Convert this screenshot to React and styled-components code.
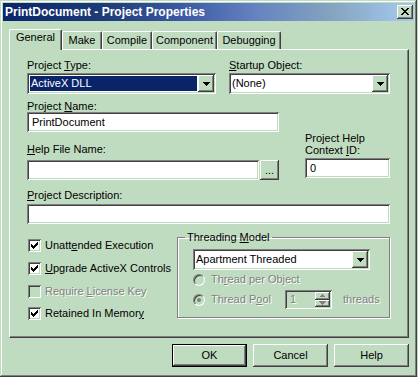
import styled, { createGlobalStyle, css } from 'styled-components';

const FACE = '#c0dcc0';
const SHADOW = '#808080';
const DARK = '#404040';

const raised = css`
  box-shadow: inset -1px -1px ${DARK}, inset 1px 1px #fff, inset -2px -2px ${SHADOW},
    inset 2px 2px ${FACE};
`;

const sunken = css`
  box-shadow: inset 1px 1px ${SHADOW}, inset -1px -1px #fff, inset 2px 2px ${DARK},
    inset -2px -2px ${FACE};
`;

const tabs = [
  { label: 'General', width: 53, active: true },
  { label: 'Make', width: 40 },
  { label: 'Compile', width: 50 },
  { label: 'Component', width: 65 },
  { label: 'Debugging', width: 64 },
];

const DownArrow = ({ color = '#000' }) => (
  <svg width="7" height="4" viewBox="0 0 7 4" shapeRendering="crispEdges">
    <path d="M0 0h7v1H0zM1 1h5v1H1zM2 2h3v1H2zM3 3h1v1H3z" fill={color} />
  </svg>
);

const UpArrow = ({ color = '#000' }) => (
  <svg width="5" height="3" viewBox="0 0 5 3" shapeRendering="crispEdges">
    <path d="M2 0h1v1H2zM1 1h3v1H1zM0 2h5v1H0z" fill={color} />
  </svg>
);

const CheckMark = () => (
  <svg width="7" height="7" viewBox="0 0 7 7" shapeRendering="crispEdges">
    <path
      d="M0 2h1v3H0zM1 3h1v3H1zM2 4h1v3H2zM3 3h1v3H3zM4 2h1v3H4zM5 1h1v3H5zM6 0h1v3H6z"
      fill="#000"
    />
  </svg>
);

function Combo({ value, selected, width }) {
  return (
    <ComboBox $width={width}>
      <ComboValue $selected={selected}>{value}</ComboValue>
      <DropButton>
        <DownArrow />
      </DropButton>
    </ComboBox>
  );
}

function Check({ checked, disabled, top, children }) {
  return (
    <CheckRow $top={top}>
      <CheckBox $disabled={disabled}>{checked && <CheckMark />}</CheckBox>
      <CheckText $disabled={disabled}>{children}</CheckText>
    </CheckRow>
  );
}

function App() {
  return (
    <>
      <GlobalStyle />
      <Window>
        <TitleBar>
          <Title>PrintDocument - Project Properties</Title>
          <CloseButton>
            <svg width="8" height="7" viewBox="0 0 8 7" shapeRendering="crispEdges">
              <path
                d="M0 0h2v1H0zM6 0h2v1H6zM1 1h2v1H1zM5 1h2v1H5zM2 2h4v1H2zM3 3h2v1H3zM2 4h4v1H2zM1 5h2v1H1zM5 5h2v1H5zM0 6h2v1H0zM6 6h2v1H6z"
                fill="#000"
              />
            </svg>
          </CloseButton>
        </TitleBar>

        <Body>
          <TabStrip>
            {tabs.map((t) => (
              <Tab key={t.label} $active={t.active} $width={t.width}>
                {t.label}
              </Tab>
            ))}
          </TabStrip>

          <Panel>
            <TopRow>
              <div>
                <Label>
                  Project <u>T</u>ype:
                </Label>
                <Combo value="ActiveX DLL" selected width={189} />
              </div>
              <div>
                <Label>
                  <u>S</u>tartup Object:
                </Label>
                <Combo value="(None)" width={161} />
              </div>
            </TopRow>

            <MidRow>
              <LeftColumn>
                <Label>
                  Project <u>N</u>ame:
                </Label>
                <Field $width={252}>PrintDocument</Field>
                <Label $mt={11}>
                  <u>H</u>elp File Name:
                </Label>
                <InputRow>
                  <Field $width={232} />
                  <BrowseButton>...</BrowseButton>
                </InputRow>
              </LeftColumn>
              <RightColumn>
                <MultiLabel>
                  Project Help
                  <br />
                  Context <u>I</u>D:
                </MultiLabel>
                <Field $width={85} $mt={2}>
                  0
                </Field>
              </RightColumn>
            </MidRow>

            <Label $mt={9}>
              <u>P</u>roject Description:
            </Label>
            <Field $width={363} $mt={3} />

            <BottomRow>
              <CheckList>
                <Check checked top={0}>
                  Unatt<u>e</u>nded Execution
                </Check>
                <Check checked top={10}>
                  <u>U</u>pgrade ActiveX Controls
                </Check>
                <Check disabled top={10}>
                  Require <u>L</u>icense Key
                </Check>
                <Check checked top={9}>
                  Retained In Memor<u>y</u>
                </Check>
              </CheckList>

              <GroupBox>
                <GroupTitle>
                  Threading <u>M</u>odel
                </GroupTitle>
                <GroupBody>
                  <Combo value="Apartment Threaded" width={177} />
                  <RadioRow $mt={3}>
                    <Radio />
                    <RadioText>
                      Th<u>r</u>ead per Object
                    </RadioText>
                  </RadioRow>
                  <RadioRow $mt={4}>
                    <Radio $checked />
                    <RadioText $width={74}>
                      Thread P<u>o</u>ol
                    </RadioText>
                    <SpinBox>
                      <SpinValue>1</SpinValue>
                      <SpinButtons>
                        <SpinButton>
                          <UpArrow color={SHADOW} />
                        </SpinButton>
                        <SpinButton>
                          <DownArrow color={SHADOW} />
                        </SpinButton>
                      </SpinButtons>
                    </SpinBox>
                    <DisabledText>threads</DisabledText>
                  </RadioRow>
                </GroupBody>
              </GroupBox>
            </BottomRow>
          </Panel>

          <ButtonRow>
            <PushButton $default>OK</PushButton>
            <PushButton>Cancel</PushButton>
            <PushButton>Help</PushButton>
          </ButtonRow>
        </Body>
      </Window>
    </>
  );
}

const GlobalStyle = createGlobalStyle`
  * { box-sizing: border-box; }
  html, body {
    margin: 0;
    padding: 0;
    background: ${FACE};
  }
  body {
    font-family: "Liberation Sans", Arial, sans-serif;
    font-size: 11px;
    color: #000;
  }
  u { text-underline-offset: 1px; }
`;

const Window = styled.div`
  width: 417px;
  height: 377px;
  padding: 3px;
  background: ${FACE};
  box-shadow: inset -1px -1px ${DARK}, inset 1px 1px ${FACE}, inset -2px -2px ${SHADOW},
    inset 2px 2px #fff;
  display: flex;
  flex-direction: column;
`;

const TitleBar = styled.div`
  height: 18px;
  padding: 0 1px 0 2px;
  display: flex;
  align-items: center;
  justify-content: space-between;
  background: linear-gradient(
    90deg,
    #0a246a 0%,
    #1e3c78 25%,
    #3e5ca8 45%,
    #6684c0 62%,
    #84a4c0 80%,
    #a6caf0 100%
  );
`;

const Title = styled.span`
  color: #fff;
  font-weight: bold;
  font-size: 12px;
  line-height: 18px;
  white-space: nowrap;
`;

const CloseButton = styled.div`
  width: 16px;
  height: 14px;
  background: ${FACE};
  ${raised};
  display: flex;
  align-items: center;
  justify-content: center;
  padding-bottom: 1px;
`;

const Body = styled.div`
  padding: 8px 5px 0 6px;
  display: flex;
  flex-direction: column;
`;

const TabStrip = styled.div`
  display: flex;
  align-items: flex-end;
  height: 21px;
  margin-bottom: -1px;
  position: relative;
  z-index: 1;
`;

const Tab = styled.div`
  width: ${(p) => p.$width}px;
  height: ${(p) => (p.$active ? 21 : 18)}px;
  margin-bottom: ${(p) => (p.$active ? 0 : 1)}px;
  padding-top: ${(p) => (p.$active ? 1 : 2)}px;
  background: ${FACE};
  border-top: 1px solid #fff;
  border-left: 1px solid #fff;
  border-right: 1px solid ${DARK};
  border-radius: 2px 2px 0 0;
  box-shadow: inset -1px 0 ${SHADOW};
  text-align: center;
  line-height: 13px;
  white-space: nowrap;
`;

const Panel = styled.div`
  width: 400px;
  height: 289px;
  padding: 9px 0 0 17px;
  border: 1px solid;
  border-color: #fff ${DARK} ${DARK} #fff;
  box-shadow: inset -1px -1px ${SHADOW};
  display: flex;
  flex-direction: column;
`;

const Label = styled.div`
  height: 12px;
  line-height: 12px;
  margin-top: ${(p) => p.$mt || 0}px;
  white-space: nowrap;
`;

const MultiLabel = styled.div`
  line-height: 12px;
  white-space: nowrap;
`;

const TopRow = styled.div`
  display: grid;
  grid-template-columns: 189px 161px;
  column-gap: 13px;
`;

const ComboBox = styled.div`
  width: ${(p) => p.$width}px;
  height: 21px;
  margin-top: 2px;
  padding: 2px;
  background: #fff;
  ${sunken};
  display: flex;
`;

const ComboValue = styled.div`
  flex: 1;
  margin: 1px;
  padding-left: ${(p) => (p.$selected ? 1 : 0)}px;
  line-height: 15px;
  background: ${(p) => (p.$selected ? '#0a246a' : 'transparent')};
  color: ${(p) => (p.$selected ? '#fff' : '#000')};
  white-space: nowrap;
`;

const DropButton = styled.div`
  width: 16px;
  height: 17px;
  background: ${FACE};
  ${raised};
  display: flex;
  align-items: center;
  justify-content: center;
`;

const MidRow = styled.div`
  display: flex;
  align-items: flex-end;
  gap: 26px;
  margin-top: 6px;
`;

const LeftColumn = styled.div`
  width: 252px;
  display: flex;
  flex-direction: column;
`;

const RightColumn = styled.div`
  width: 85px;
  margin-bottom: 2px;
  display: flex;
  flex-direction: column;
`;

const Field = styled.div`
  width: ${(p) => p.$width}px;
  height: 20px;
  margin-top: ${(p) => p.$mt || 0}px;
  padding: 0 5px;
  line-height: 20px;
  background: #fff;
  ${sunken};
  white-space: nowrap;
`;

const InputRow = styled.div`
  display: flex;
  gap: 1px;
  margin-top: 5px;
`;

const BrowseButton = styled.div`
  width: 19px;
  height: 20px;
  background: ${FACE};
  ${raised};
  text-align: center;
  line-height: 20px;
`;

const BottomRow = styled.div`
  display: flex;
  margin-top: 7px;
`;

const CheckList = styled.div`
  width: 150px;
  padding: 8px 0 0 1px;
  display: flex;
  flex-direction: column;
`;

const CheckRow = styled.div`
  display: flex;
  align-items: center;
  height: 13px;
  margin-top: ${(p) => p.$top}px;
`;

const CheckBox = styled.div`
  width: 13px;
  height: 13px;
  flex: none;
  background: ${(p) => (p.$disabled ? FACE : '#fff')};
  ${sunken};
  display: flex;
  align-items: center;
  justify-content: center;
`;

const disabledText = css`
  color: ${SHADOW};
  text-shadow: 1px 1px 0 #fff;
`;

const CheckText = styled.span`
  margin-left: 4px;
  line-height: 13px;
  white-space: nowrap;
  ${(p) => p.$disabled && disabledText};
`;

const GroupBox = styled.fieldset`
  width: 213px;
  height: 87px;
  margin: 0;
  padding: 0;
  min-width: 0;
  border: 1px solid ${SHADOW};
  box-shadow: 1px 1px 0 #fff, inset 1px 1px 0 #fff;
`;

const GroupTitle = styled.legend`
  margin-left: 7px;
  padding: 0 2px;
  line-height: 13px;
`;

const GroupBody = styled.div`
  padding: 3px 0 0 15px;
  display: flex;
  flex-direction: column;
`;

const RadioRow = styled.div`
  display: flex;
  align-items: center;
  margin-top: ${(p) => p.$mt}px;
  min-height: 13px;
`;

const Radio = styled.div`
  width: 12px;
  height: 12px;
  flex: none;
  border-radius: 50%;
  border: 1px solid;
  border-color: ${SHADOW} #fff #fff ${SHADOW};
  box-shadow: inset 1px 1px 0 ${DARK}, inset -1px -1px 0 ${FACE};
  background: ${FACE};
  display: flex;
  align-items: center;
  justify-content: center;

  &::after {
    content: '';
    display: ${(p) => (p.$checked ? 'block' : 'none')};
    width: 4px;
    height: 4px;
    border-radius: 50%;
    background: ${SHADOW};
  }
`;

const RadioText = styled.span`
  margin-left: 6px;
  width: ${(p) => (p.$width ? `${p.$width}px` : 'auto')};
  line-height: 13px;
  white-space: nowrap;
  ${disabledText};
`;

const DisabledText = styled.span`
  margin-left: 11px;
  line-height: 13px;
  ${disabledText};
`;

const SpinBox = styled.div`
  width: 47px;
  height: 19px;
  padding: 2px;
  background: ${FACE};
  ${sunken};
  display: flex;
`;

const SpinValue = styled.div`
  flex: 1;
  padding-left: 3px;
  line-height: 15px;
  ${disabledText};
`;

const SpinButtons = styled.div`
  width: 15px;
  display: flex;
  flex-direction: column;
`;

const SpinButton = styled.div`
  flex: 1;
  background: ${FACE};
  ${raised};
  display: flex;
  align-items: center;
  justify-content: center;
`;

const ButtonRow = styled.div`
  display: flex;
  justify-content: flex-end;
  gap: 6px;
  margin-top: 6px;
`;

const PushButton = styled.div`
  width: 75px;
  height: 23px;
  background: ${FACE};
  text-align: center;
  line-height: 23px;
  ${raised};
  ${(p) =>
    p.$default &&
    css`
      box-shadow: inset 0 0 0 1px #000, inset -2px -2px ${DARK}, inset 2px 2px #fff,
        inset -3px -3px ${SHADOW};
    `}
`;

export default App;
